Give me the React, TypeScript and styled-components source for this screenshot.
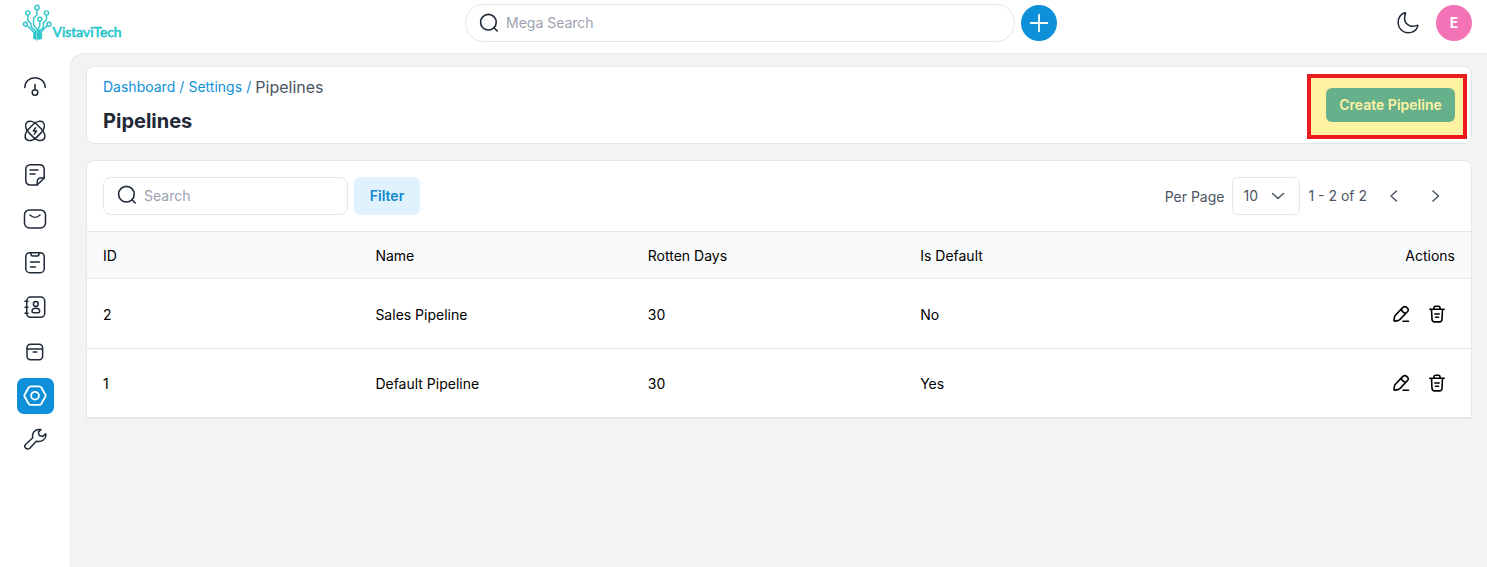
import React from "react";
import styled, { createGlobalStyle, css } from "styled-components";

const GlobalStyle = createGlobalStyle`
  *, *::before, *::after { box-sizing: border-box; }
  body {
    margin: 0;
    background: #fff;
    color: #000;
    font-family: Inter, "Liberation Sans", sans-serif;
    font-size: 14px;
    line-height: 20px;
  }
  button, input { font: inherit; }
`;

const Page = styled.div`
  height: 567px;
  display: flex;
  flex-direction: column;
  overflow: hidden;
`;

const Header = styled.header`
  height: 53px;
  flex: none;
  display: grid;
  grid-template-columns: 465px 592px 1fr;
  align-items: start;
  padding: 4px 15px 0 0;
`;

const Brand = styled.a`
  display: block;
  padding-left: 22px;
  height: 38px;
`;

const HeaderCenter = styled.div`
  display: flex;
  align-items: center;
  gap: 6px;
`;

const SearchBox = styled.label<{ $pill?: boolean; $width: number }>`
  display: flex;
  align-items: center;
  width: ${(p) => p.$width}px;
  height: 38px;
  gap: 6px;
  padding-left: 12px;
  border: 1px solid #e5e7eb;
  border-radius: ${(p) => (p.$pill ? 19 : 8)}px;
  background: #fff;
  color: #1f2937;
  svg { margin-bottom: ${(p) => (p.$pill ? 0 : 2)}px; }
`;

const SearchInput = styled.input`
  flex: 1;
  min-width: 0;
  padding: 0;
  border: 0;
  outline: 0;
  background: transparent;
  &::placeholder { color: #9ca3af; opacity: 1; }
`;

const Round = styled.button<{ $bg: string }>`
  display: flex;
  align-items: center;
  justify-content: center;
  width: 36px;
  height: 36px;
  padding: 0;
  border: 0;
  border-radius: 50%;
  background: ${(p) => p.$bg};
  color: #fff;
  font-weight: 700;
`;

const HeaderEnd = styled.div`
  display: flex;
  justify-content: flex-end;
  align-items: center;
  gap: 16px;
  height: 38px;
  color: #1f2937;
`;

const Body = styled.div`
  flex: 1;
  display: flex;
  min-height: 0;
`;

const Sidebar = styled.nav`
  width: 70px;
  flex: none;
  display: flex;
  flex-direction: column;
  align-items: center;
  gap: 8.1px;
  padding-top: 16px;
`;

const NavItem = styled.a<{ $active?: boolean }>`
  display: flex;
  align-items: center;
  justify-content: center;
  width: 37px;
  height: 36px;
  border-radius: 7px;
  color: #1f2937;
  ${(p) => p.$active && css`
    background: #0e90d9;
    color: #fff;
  `}
`;

const Main = styled.main`
  flex: 1;
  display: flex;
  flex-direction: column;
  gap: 16px;
  padding: 12px 15px 0;
  border: solid #e5e7eb;
  border-width: 1px 0 0 1px;
  border-top-left-radius: 14px;
  background: #f2f3f5;
`;

const Card = styled.section`
  border: 1px solid #e5e7eb;
  border-radius: 8px;
  background: #fff;
`;

const TitleCard = styled(Card)`
  display: flex;
  justify-content: space-between;
  height: 78px;
  padding: 8px 16px;
`;

const Crumbs = styled.div`
  display: flex;
  align-items: center;
  gap: 4.1px;
  height: 24px;
  color: #0e90d9;
`;

const Current = styled.span`
  font-size: 16px;
  color: #4b5563;
`;

const Title = styled.h1`
  margin: 9px 0 0;
  font-size: 20px;
  font-weight: 700;
  line-height: 26px;
  color: #1f2937;
`;

const CreateArea = styled.div`
  position: relative;
  padding-top: 13px;
`;

const CreateButton = styled.button`
  position: relative;
  z-index: 1;
  display: block;
  width: 129px;
  height: 34px;
  padding: 0;
  border: 0;
  border-radius: 6px;
  background: #66b08c;
  color: #fff3a3;
  font-weight: 600;
`;

const Highlight = styled.span`
  position: absolute;
  top: -1px;
  right: -12px;
  width: 160px;
  height: 65px;
  border: 4px solid #e81c1c;
  background: #fff3a3;
`;

const TableCard = styled(Card)`
  border-bottom-width: 2px;
  border-radius: 8px 8px 0 0;
`;

const Toolbar = styled.div`
  display: flex;
  align-items: center;
  justify-content: space-between;
  height: 70px;
  padding: 0 16px;
`;

const Tools = styled.div`
  display: flex;
  gap: 6px;
`;

const FilterButton = styled.button`
  width: 66px;
  height: 38px;
  padding: 0;
  border: 0;
  border-radius: 6px;
  background: #e0f2fe;
  color: #0e88cc;
  font-weight: 600;
`;

const Pager = styled.div`
  display: flex;
  align-items: center;
  color: #4b5563;
`;

const PagerLabel = styled.span`
  padding-top: 2px;
  margin-right: 8px;
`;

const PageSize = styled.button`
  display: flex;
  align-items: center;
  justify-content: space-between;
  width: 68px;
  height: 38px;
  margin-right: 8px;
  padding: 0 14px 0 10px;
  border: 1px solid #e5e7eb;
  border-radius: 6px;
  background: #fff;
  color: #4b5563;
`;

const PagerArrows = styled.div`
  display: flex;
  gap: 28px;
  margin: 0 12px 1px 20px;
`;

const Row = styled.div`
  display: grid;
  grid-template-columns: repeat(5, 1fr);
  column-gap: 10px;
  align-items: center;
  height: 70px;
  padding: 3px 16px 0;
  border-top: 1px solid #e5e7eb;
`;

const HeadRow = styled(Row)`
  height: 47px;
  padding-top: 2px;
  background: #f9fafb;
`;

const LastRow = styled(Row)`
  height: 69px;
  padding-bottom: 1px;
`;

const Cell = styled.span<{ $end?: boolean }>`
  text-align: ${(p) => (p.$end ? "right" : "left")};
`;

const RowActions = styled.div`
  display: flex;
  justify-content: flex-end;
  gap: 16px;
  padding: 0 8px 3px 0;
`;

const Icon = ({ size = 24, stroke = 1.5, children }: { size?: number; stroke?: number; children: React.ReactNode }) => (
  <svg width={size} height={size} viewBox={`0 0 ${size} ${size}`} fill="none" stroke="currentColor" strokeWidth={stroke} strokeLinecap="round" strokeLinejoin="round">
    {children}
  </svg>
);

const SearchIcon = () => (
  <Icon size={22} stroke={1.6}><circle cx="10.4" cy="10.2" r="7.8" /><path d="m16.2 16 3 3" /></Icon>
);

const Logo = () => (
  <svg width="102" height="38" viewBox="0 0 102 38" fill="none" stroke="#2cc6cd" strokeWidth="1.4">
    <circle cx="15" cy="3.5" r="2.2" />
    <circle cx="5.8" cy="9" r="2.1" />
    <circle cx="24.5" cy="9" r="2.1" />
    <circle cx="17.8" cy="15.2" r="2" />
    <circle cx="3.4" cy="20.2" r="2" />
    <circle cx="27" cy="20.2" r="2" />
    <path d="M15 5.7V11l-3.4 3.2v7L15 25v11.5M5.8 11.2v5.2l3.3 3.2v3.2l4.2 4.1v8.6M24.5 11.2v4.6l-3.1 3v4.4l-3.5 3.4v9.1M17.8 17.2v5L16.5 24v11.5M5 21.4l5.6 5.6 1.3 1.8v6.2M25.4 21.4L20.8 26l-1.4 1.8v7.2" />
    <text x="30.6" y="32.7" textLength="69" lengthAdjust="spacingAndGlyphs" fontFamily="Lato, sans-serif" fontSize="13.5" fontWeight="400" fill="#25e3e8" stroke="#22b9c0" strokeWidth="0.6">VistaviTech</text>
  </svg>
);

const navIcons: React.ReactNode[] = [
  <><path d="M1.8 12.5C1.8 6.7 6.2 2.7 12 2.7s10.2 4 10.2 9.8" /><path d="M12 9.5v5" /><circle cx="12" cy="17.5" r="2.8" /></>,
  <>
    <rect x="6.2" y="0" width="11.6" height="24" rx="5.8" ry="9" transform="rotate(45 12 11.7)" />
    <rect x="6.2" y="0" width="11.6" height="24" rx="5.8" ry="9" transform="rotate(-45 12 11.7)" />
    <path d="m12.7 8.8-2.4 3.1h3.4l-2.4 3.2" />
  </>,
  <>
    <path d="M21.2 15V6.5c0-3-1.5-4.8-4.7-4.8h-9C4.3 1.7 2.8 3.5 2.8 6.5v10.5c0 3.2 1.7 5 4.7 5h6.7l7-7Z" />
    <path d="M21.2 15h-3c-2.5 0-4 1.4-4 4v3M7 7h8M7 11h5" />
  </>,
  <><rect x="1.5" y="2.9" width="21" height="18" rx="5" /><path d="M7 8c3 3 7 3 10 0" /></>,
  <><rect x="2.8" y="1.7" width="18.4" height="20" rx="4" /><path d="M8 1.8V3c0 1.2.8 2 2 2h4c1.2 0 2-.8 2-2V1.800M7.500 11h9M7.500 16h5" /></>,
  <>
    <rect x="3.7" y="2" width="18" height="20.3" rx="4" />
    <path d="M2 6.2h3M2 12.2h3M2 18.2h3" /><circle cx="12.8" cy="9" r="2.4" />
    <path d="M9 16.3c0-2 1.5-3 3.8-3s3.900 1 3.900 3c0 1-.7 1.500-1.500 1.500h-4.700c-.8 0-1.500-.5-1.500-1.500Z" />
  </>,
  <><rect x="4" y="4.3" width="15.6" height="15.4" rx="3.5" /><path d="M4.1 9h15.400M10.200 12h3.600" /></>,
  <g strokeWidth="1.8"><path d="M7.7 2.400h8.600c.9 0 1.500.3 2 1.100l4 7c.5.900.5 1.500 0 2.300l-4 7c-.5.800-1.100 1.100-2 1.100H7.700c-.9 0-1.500-.3-2-1.100l-4-7c-.5-.8-.5-1.400 0-2.300l4-7c.5-.8 1.100-1.100 2-1.100Z" /><circle cx="12" cy="11.7" r="3.9" /></g>,
  <path d="M13.3 13.200 6.800 20.200a2.800 2.800 0 0 1-4.200-.1c-1.100-1.200-1-2.800.2-3.900l7-6.500c-1.300-4.800 2.300-9.200 8.100-8.100l-2.500 2.500.8 3.500 3.500.8 3-2.700c1.100 5.300-4.100 9-9.400 7.500Z" />,
];

const EditIcon = () => (
  <Icon size={20} stroke={1.6}>
    <path d="m11.600 3.600-7.200 7.600c-.5.600-.8 1.100-.9 1.800L3 16.200c-.1.700.3 1 .9.900l3.200-.5c.7-.1 1.200-.4 1.700-1l7.300-7.600c1.500-1.500 1.600-2.700.1-4.100-1.600-1.500-3-1.700-4.600-.3ZM10.400 5c.5 2.500 1.900 3.900 4.400 4.300M12 17.200h5.500" />
  </Icon>
);

const TrashIcon = () => (
  <Icon size={20} stroke={1.6}>
    <path d="M2.800 5.200h14.400M7 5V3.700c0-1 .5-1.500 1.500-1.500h3c1 0 1.500.5 1.500 1.500V5M4.500 5.300l.5 10c.1 1.800.8 2.600 2.600 2.600h4.800c1.800 0 2.500-.8 2.600-2.600l.5-10M7.800 10h4.400M8.500 13.200h3" />
  </Icon>
);

const records = [
  { id: 2, name: "Sales Pipeline", days: 30, isDefault: "No" },
  { id: 1, name: "Default Pipeline", days: 30, isDefault: "Yes" },
];

export default function App() {
  return (
    <Page>
      <GlobalStyle />
      <Header>
        <Brand><Logo /></Brand>
        <HeaderCenter>
          <SearchBox $pill $width={550}>
            <SearchIcon />
            <SearchInput placeholder="Mega Search" />
          </SearchBox>
          <Round $bg="#0e90d9"><Icon stroke={1.8}><path d="M12 3.7v16.600M3.700 12h16.600" /></Icon></Round>
        </HeaderCenter>
        <HeaderEnd>
          <Icon><path d="M8.7 1.700C4.500 3.400 1.900 7.300 2.100 12c.3 5.700 4.700 9.700 10 9.700 4.600 0 8.200-2.500 9.700-6.500.3-.8-.2-1.200-1-.8-6.500 2.700-12.800-1.400-12.200-8.200.1-1.500.4-2.500.9-3.600.3-.7-.1-1.100-.8-.9Z" /></Icon>
          <Round $bg="#f472b6">E</Round>
        </HeaderEnd>
      </Header>
      <Body>
        <Sidebar>
          {navIcons.map((shape, i) => (
            <NavItem key={i} $active={i === 7}><Icon>{shape}</Icon></NavItem>
          ))}
        </Sidebar>
        <Main>
          <TitleCard>
            <div>
              <Crumbs>
                <span>Dashboard</span><span>/</span><span>Settings</span><span>/</span>
                <Current>Pipelines</Current>
              </Crumbs>
              <Title>Pipelines</Title>
            </div>
            <CreateArea>
              <Highlight />
              <CreateButton>Create Pipeline</CreateButton>
            </CreateArea>
          </TitleCard>
          <TableCard>
            <Toolbar>
              <Tools>
                <SearchBox $width={245}>
                  <SearchIcon />
                  <SearchInput placeholder="Search" />
                </SearchBox>
                <FilterButton>Filter</FilterButton>
              </Tools>
              <Pager>
                <PagerLabel>Per Page</PagerLabel>
                <PageSize>10<Icon size={14}><path d="m1.5 4.500 5.500 5 5.500-5" /></Icon></PageSize>
                <span>1 - 2 of 2</span>
                <PagerArrows>
                  <Icon size={14}><path d="M9.500 2 4 7l5.500 5" /></Icon>
                  <Icon size={14}><path d="m4 2 5.500 5L4 12" /></Icon>
                </PagerArrows>
              </Pager>
            </Toolbar>
            <HeadRow>
              <Cell>ID</Cell><Cell>Name</Cell><Cell>Rotten Days</Cell><Cell>Is Default</Cell><Cell $end>Actions</Cell>
            </HeadRow>
            {records.map((r, i) => {
              const Line = i === records.length - 1 ? LastRow : Row;
              return (
                <Line key={r.id}>
                  <Cell>{r.id}</Cell><Cell>{r.name}</Cell><Cell>{r.days}</Cell><Cell>{r.isDefault}</Cell>
                  <RowActions><EditIcon /><TrashIcon /></RowActions>
                </Line>
              );
            })}
          </TableCard>
        </Main>
      </Body>
    </Page>
  );
}
